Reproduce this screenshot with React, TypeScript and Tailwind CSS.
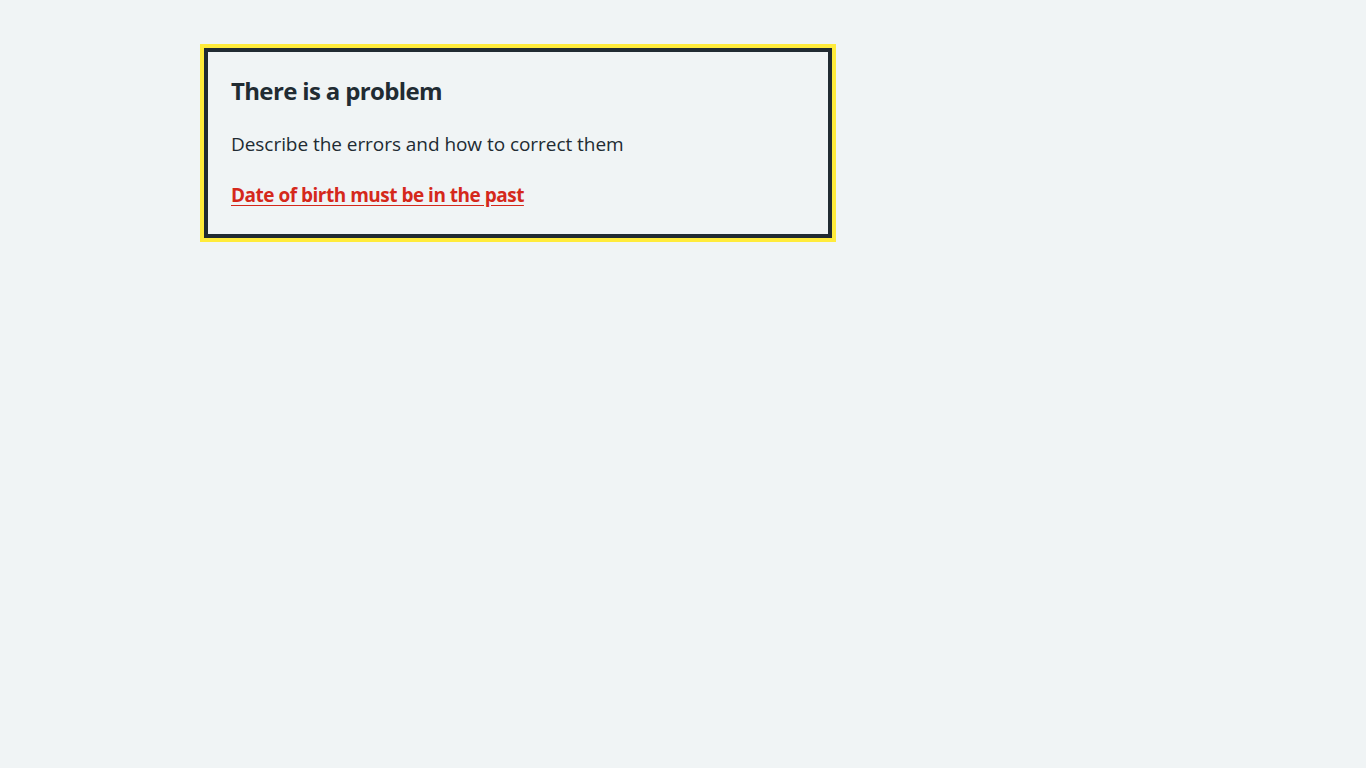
export default function App() {
  return (
    <div className="min-h-screen bg-[#f0f4f5] text-[#212b32]" style={{ fontFamily: '"Open Sans", "Noto Sans", Arial, sans-serif' }}>
      <div className="pt-[44px] pl-[200px]">
        <div className="w-[636px] border-4 border-[#ffeb3b]">
          <div className="border-4 border-[#212b32] px-[23px] pt-[23px] pb-[25px]">
            <h2 className="text-[24px] leading-[32px] font-bold tracking-[-0.65px] mb-[23px]">There is a problem</h2>
            <p className="text-[19px] leading-[28px] tracking-[-0.05px] mb-[23px]">Describe the errors and how to correct them</p>
            <ul>
              <li>
                <a href="#" className="text-[19px] leading-[28px] font-bold tracking-[-0.5px] text-[#d5281b] underline underline-offset-[3px]">
                  Date of birth must be in the past
                </a>
              </li>
            </ul>
          </div>
        </div>
      </div>
    </div>
  )
}
